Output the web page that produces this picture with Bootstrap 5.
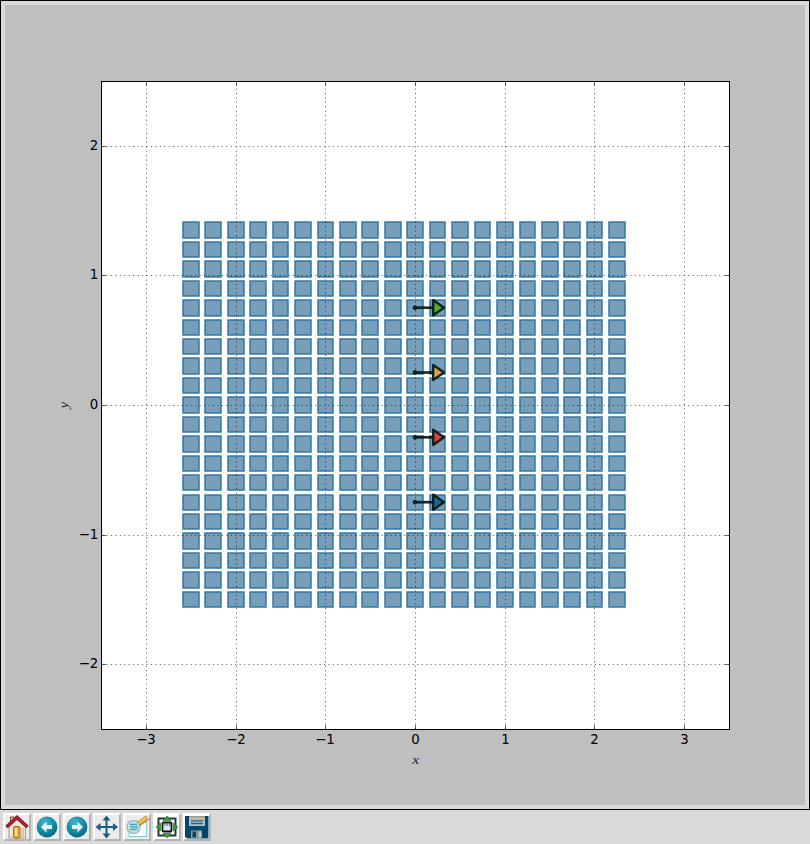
<!DOCTYPE html>
<html lang="en">
<head>
<meta charset="utf-8">
<title>Figure 1</title>
<link href="https://cdn.jsdelivr.net/npm/bootstrap@5.3.0/dist/css/bootstrap.min.css" rel="stylesheet">
<style>
body{width:810px;height:844px;background:#d9d9d9;font-family:"DejaVu Sans",sans-serif}
.figure-frame{width:810px;height:810px;border:1px solid #000;padding:4px;background:#d9d9d9}
.figure-canvas{width:800px;height:800px;background:#bfbfbf}
.plot-toolbar{height:34px;padding:3px 3px 0;gap:2px}
.tool{width:28px;height:28px;border:2px solid;border-color:#fff #b4b4b4 #b4b4b4 #fff;background:#ececec}
.tool.lit{background:#fff}
.tick-label{font:13.33px "DejaVu Sans",sans-serif}
.axis-name{font:italic 13.5px "Liberation Serif",serif;fill:#222}
.grid-line{stroke:#000;stroke-opacity:.6;stroke-width:1;stroke-dasharray:1.11 3.33;fill:none}
.tick-mark{stroke:#000;stroke-opacity:.6;stroke-width:1}
</style>
<script src="https://cdn.jsdelivr.net/npm/bootstrap@5.3.0/dist/js/bootstrap.bundle.min.js"></script>
</head>
<body class="m-0 overflow-hidden d-flex flex-column">
<main class="figure-frame flex-shrink-0">
<svg class="figure-canvas d-block" viewBox="5 5 800 800">
  <rect x="101.5" y="81.5" width="628" height="648" fill="#fff"/>
  <g id="cells" fill="#779fba" stroke="#2a6f9f" stroke-opacity=".7" stroke-width="2" stroke-linejoin="round"></g>
  <g id="arrows" stroke="#071717" stroke-opacity=".92"></g>
  <g id="grid"></g>
  <rect x="101.5" y="81.5" width="628" height="648" fill="none" stroke="#000"/>
  <g id="labels" class="tick-label"></g>
  <text class="axis-name" transform="translate(415.8 764) scale(1.15 1)" text-anchor="middle">x</text>
  <text class="axis-name" transform="translate(68 405.3) rotate(-90) scale(1.1 1)" text-anchor="middle">y</text>
</svg>
</main>
<nav class="plot-toolbar d-flex align-items-start">
  <div class="tool" role="button" aria-label="Home"><svg class="d-block" width="24" height="24">
    <path d="M5.500 2H9v6H5.500z" fill="#d9c28e" stroke="#a03a3a"/>
    <path d="M4 11l8-8 8.500 8v12H4z" fill="#f0ead4" stroke="#a79a89"/>
    <path d="M1.500 12L12 2.500 22.500 12" fill="none" stroke="#7b1326" stroke-width="3.6"/>
    <path d="M2 11.300L12 2.300l10 9" fill="none" stroke="#b32436" stroke-width="1.8"/>
    <rect x="8.500" y="11.500" width="6.500" height="11.500" rx="1.500" fill="#dba73a" stroke="#a66a20"/>
    <path d="M11 13v8" stroke="#f7dc86" stroke-width="2.500"/>
    <rect x="16.500" y="13" width="2.500" height="9" fill="#d4c9ae"/></svg></div>
  <div class="tool" role="button" aria-label="Back"><svg class="d-block" width="24" height="24">
    <defs><radialGradient id="orb" cx=".4" cy=".3" r=".7"><stop offset="0" stop-color="#45b7ca"/><stop offset=".65" stop-color="#1189a3"/><stop offset="1" stop-color="#08677e"/></radialGradient></defs>
    <circle cx="12" cy="12" r="10.400" fill="url(#orb)"/>
    <path d="M6 12l5.500-5.500v3.500H17v4h-5.500v3.500z" fill="#dff5f9"/></svg></div>
  <div class="tool" role="button" aria-label="Forward"><svg class="d-block" width="24" height="24">
    <circle cx="12" cy="12" r="10.400" fill="url(#orb)"/>
    <path d="M18 12l-5.500-5.500v3.500H7v4h5.500v3.500z" fill="#dff5f9"/></svg></div>
  <div class="tool" role="button" aria-label="Pan"><svg class="d-block" width="24" height="24" fill="#17607f">
    <path d="M10.500 4h2v16h-2zM4 11h16v2H4zM11.500 .5L15.500 5.500h-8zM11.500 23.500l-4-5h8zM.5 12l5-4v8zM23 12l-5 4V8z"/></svg></div>
  <div class="tool" role="button" aria-label="Zoom"><svg class="d-block" width="24" height="24">
    <rect x="4" y="7.500" width="17.500" height="14" fill="#f6fcfc" stroke="#8acbd3"/>
    <circle cx="8.500" cy="12" r="6.500" fill="#c5e4e9" stroke="#a0bcc4" stroke-width="1.500"/>
    <path d="M5 9.500h7M5 12h8M5 14.500h7" stroke="#4ba4b4" stroke-width="1.300"/>
    <path d="M13.500 9l9-6.500" stroke="#ba832d" stroke-width="5"/>
    <path d="M13.700 8.400l8.500-6.100" stroke="#f0c05b" stroke-width="3"/></svg></div>
  <div class="tool lit" role="button" aria-label="Configure subplots"><svg class="d-block" width="24" height="24">
    <rect x="3.500" y="3.500" width="17" height="17" fill="#fff" stroke="#26383a" stroke-width="2"/>
    <path d="M12 1l4 4.500H8zM12 23l-4-4.500h8zM1 12l4.500-4v8zM23 12l-4.500 4V8z" fill="#38a02e" stroke="#176917" stroke-width=".6"/>
    <rect x="7.500" y="7.500" width="9" height="9" rx="1" fill="#dfe8ee" stroke="#0a1518" stroke-width="1.800"/>
    <path d="M10 8v3M12.200 8v3M14.400 8v3" stroke="#526a78"/></svg></div>
  <div class="tool lit" role="button" aria-label="Save"><svg class="d-block" width="24" height="24">
    <path d="M0 1h23.500v22.500H2L0 21.500z" fill="#044769"/>
    <path d="M4 1.500h16v9.500H4z" fill="#a8c3cf"/>
    <path d="M4 2.500h16" stroke="#dfad62" stroke-width="2"/>
    <path d="M6 5.800h12M6 8.500h12" stroke="#315f78" stroke-width="1.300"/>
    <path d="M6 15.500h11v7.500H6z" fill="#8d9aa3"/>
    <path d="M7.500 16.500H11v6H7.500z" fill="#123f59"/>
    <path d="M14 16.500h2v6h-2z" fill="#c5cdd1"/></svg></div>
</nav>
<script>
const ns='http://www.w3.org/2000/svg';
function add(group,tag,attrs,text){
  const el=document.createElementNS(ns,tag);
  for(const k in attrs) el.setAttribute(k,attrs[k]);
  if(text!==undefined) el.textContent=text;
  document.getElementById(group).appendChild(el);
}
for(let r=0;r<20;r++) for(let c=0;c<20;c++){
  const cx=190.9+22.43*c, cy=230.04+19.44*r;
  const x=Math.round(cx-7.85), y=Math.round(cy-7.7);
  add('cells','rect',{x,y,width:Math.round(cx+7.85)-x,height:Math.round(cy+7.7)-y});
}
[[307.7,'#4bae33'],[372.5,'#dfa53a'],[437.3,'#dd4034'],[502.2,'#146d94']].forEach(([y,fill])=>{
  add('arrows','path',{d:`M415 ${y}H433`,'stroke-width':2.7});
  add('arrows','circle',{cx:415,cy:y,r:1.9,fill:fill==='#146d94'?'#0c3a50':'#102820','stroke-width':1});
  add('arrows','path',{d:`M433.200 ${y-7.6}L444 ${y}L433.200 ${y+7.6}Z`,fill,'stroke-width':2.4,'stroke-linejoin':'round'});
});
[[146.5,-3],[236.5,-2],[325.5,-1],[415.5,0],[505.5,1],[594.5,2],[684.5,3]].forEach(([x,v])=>{
  add('grid','path',{class:'grid-line',d:`M${x} 729V82`});
  add('grid','path',{class:'tick-mark',d:`M${x} 729v-4M${x} 82v4`});
  add('labels','text',{x:v<0?x-.5:x,y:744,'text-anchor':'middle'},String(v).replace('-','\u2212'));
});
[[146.5,2],[275.5,1],[405.5,0],[535.5,-1],[664.5,-2]].forEach(([y,v])=>{
  add('grid','path',{class:'grid-line',d:`M102 ${y}H729`});
  add('grid','path',{class:'tick-mark',d:`M102 ${y}h4M729 ${y}h-4`});
  add('labels','text',{x:98.3,y:y+3.5,'text-anchor':'end'},String(v).replace('-','\u2212'));
});
</script>
</body>
</html>
